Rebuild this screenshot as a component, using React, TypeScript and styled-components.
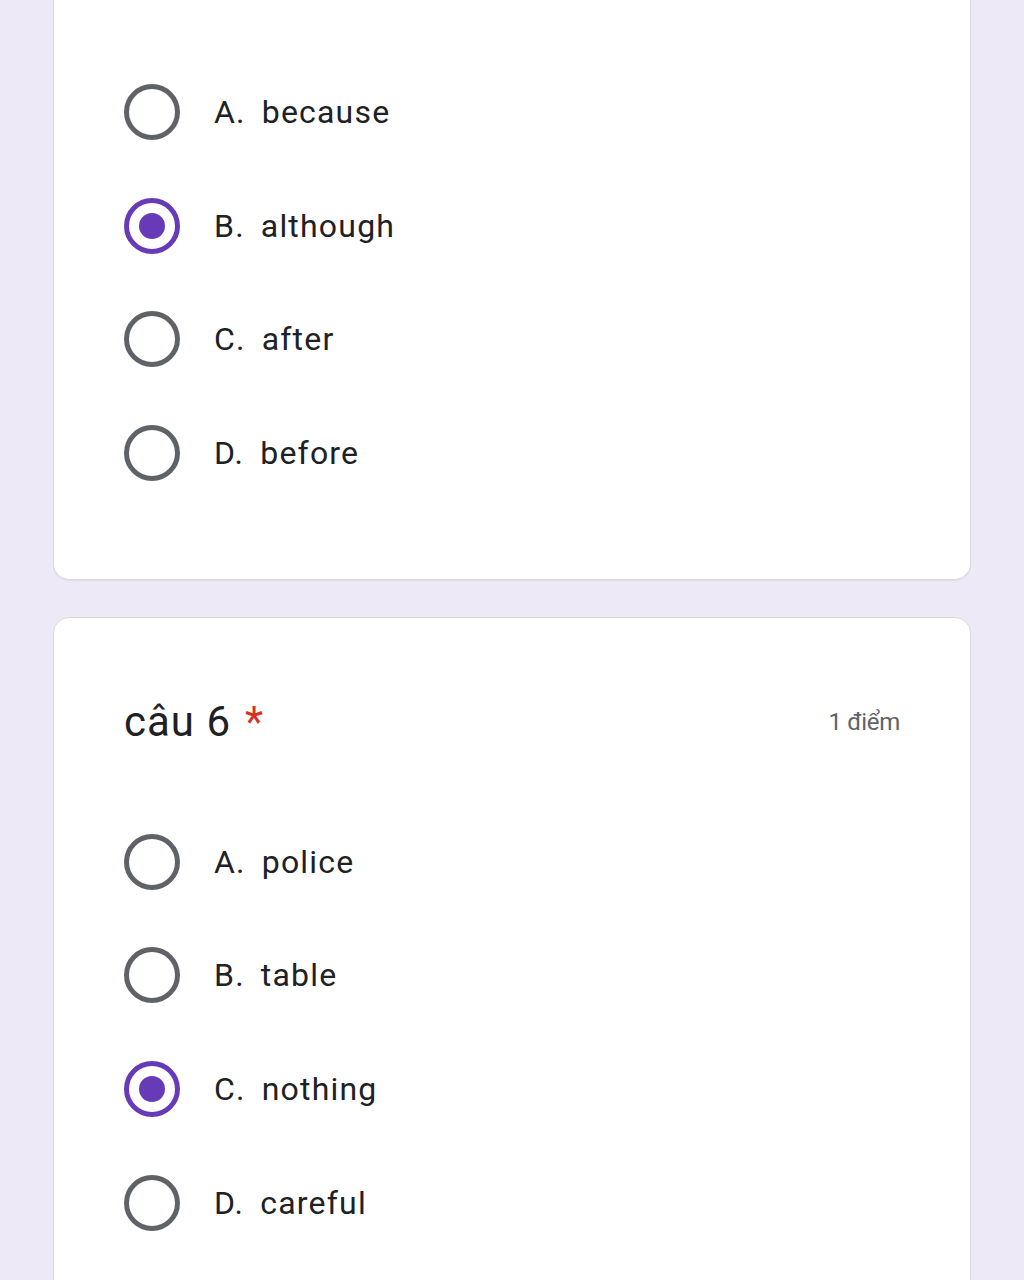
import React from "react";
import styled, { createGlobalStyle, css } from "styled-components";

const GlobalStyle = createGlobalStyle`
  html, body {
    margin: 0;
    padding: 0;
    background: #ede9f7;
    font-family: Roboto, "Noto Sans", sans-serif;
    color: #202124;
  }
`;

const Page = styled.div`
  display: flex;
  flex-direction: column;
  gap: 37px;
  padding: 0 53px;
`;

const Card = styled.div<{ $clipped?: boolean }>`
  background: #fff;
  border: 1px solid #dadada;
  border-radius: 16px;
  box-shadow: 0 1px 1px rgba(0, 0, 0, 0.06);
  padding: 74px 70px 69px;

  ${({ $clipped }) =>
    $clipped &&
    css`
      border-top: none;
      border-top-left-radius: 0;
      border-top-right-radius: 0;
      padding-top: 55px;
    `};
`;

const Header = styled.div`
  display: flex;
  align-items: center;
  justify-content: space-between;
  height: 60px;
  margin-bottom: 53px;
`;

const Title = styled.div`
  font-size: 42px;
  letter-spacing: 1px;
  color: #202124;
`;

const Required = styled.span`
  color: #d93025;
  margin-left: 14px;
`;

const Points = styled.div`
  font-size: 24px;
  color: #5f6368;
  letter-spacing: -0.3px;
`;

const Option = styled.div`
  display: flex;
  align-items: center;
  height: 113.7px;
  gap: 34px;
`;

const Radio = styled.div<{ $checked?: boolean }>`
  box-sizing: border-box;
  width: 56px;
  height: 56px;
  border-radius: 50%;
  border: 5px solid ${({ $checked }) => ($checked ? "#673ab7" : "#5f6368")};
  display: flex;
  align-items: center;
  justify-content: center;
  flex-shrink: 0;

  ${({ $checked }) =>
    $checked &&
    css`
      &::after {
        content: "";
        width: 26px;
        height: 26px;
        border-radius: 50%;
        background: #673ab7;
      }
    `};
`;

const Label = styled.div`
  font-size: 32px;
  letter-spacing: 1.2px;
  color: #202124;
`;

const Letter = styled.span`
  margin-right: 16px;
`;

interface Question {
  title?: string;
  points?: string;
  options: string[];
  selected: number;
}

const questions: Question[] = [
  { options: ["because", "although", "after", "before"], selected: 1 },
  {
    title: "câu 6",
    points: "1 điểm",
    options: ["police", "table", "nothing", "careful"],
    selected: 2
  }
];

const letters = ["A.", "B.", "C.", "D."];

const App: React.FC = () => (
  <>
    <GlobalStyle />
    <Page>
      {questions.map((q, qi) => (
        <Card key={qi} $clipped={!q.title}>
          {q.title && (
            <Header>
              <Title>
                {q.title}
                <Required>*</Required>
              </Title>
              <Points>{q.points}</Points>
            </Header>
          )}
          {q.options.map((opt, i) => (
            <Option key={opt}>
              <Radio $checked={i === q.selected} />
              <Label>
                <Letter>{letters[i]}</Letter>
                {opt}
              </Label>
            </Option>
          ))}
        </Card>
      ))}
    </Page>
  </>
);

export default App;
